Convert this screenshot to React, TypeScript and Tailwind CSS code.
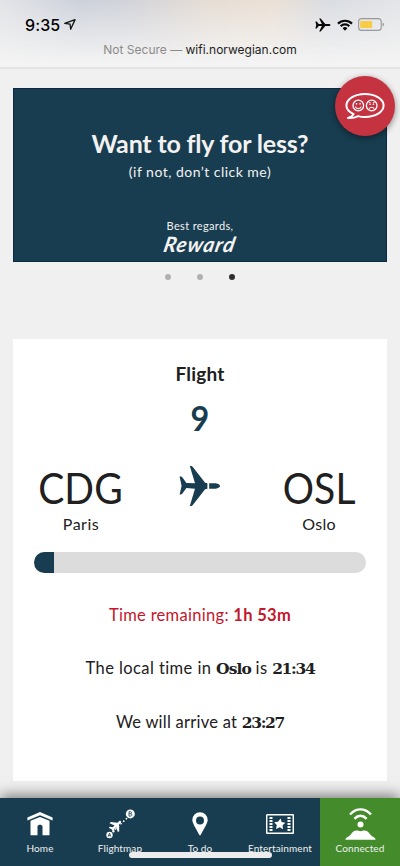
import React from "react";

function StatusBar() {
  return (
    <header className="h-[69px] shrink-0 border-b-2 border-[#e4e4e4] bg-[linear-gradient(to_bottom,transparent_0%,#f3f3f3_92%),linear-gradient(to_right,#e2e4e7_0%,#cdd1db_20%,#d1d3da_32%,#e6ddd4_53%,#ebe0d5_68%,#d9dce2_82%,#e3e5e8_100%)]">
      <div className="flex h-[40px] items-center pt-[9px] pl-[25px] pr-[15px]">
        <span className="w-[36px] whitespace-nowrap font-['Inter',sans-serif] text-[16px] leading-5 font-medium tracking-[0.1px] text-black">9:35</span>
        <svg className="ml-[3px]" width="12" height="13" viewBox="0 0 13 13" fill="none" stroke="#111" strokeWidth="1.4" strokeLinejoin="round">
          <path d="M.8 5.2 12 1.2 7.2 11.6 6.6 6.2Z" />
        </svg>
        <svg className="ml-auto" width="16" height="14" viewBox="0 0 16 14">
          <path d="M.4 3.5h1.3l2 2.4h3.2L4.2.5h1.5l4.6 5.4h3.4c1 0 1.8.5 1.8 1.1s-.8 1.1-1.8 1.1h-3.4l-4.6 5.4H4.2l2.7-5.4H3.7l-2 2.4H.4L1.2 7Z" fill="#080808" />
        </svg>
        <svg className="ml-[6px]" width="16" height="12" viewBox="0 0 16 12" fill="none" stroke="#080808" strokeWidth="2.2">
          <path d="M1 4.6a10 10 0 0 1 14 0M3.7 7.2a6.2 6.2 0 0 1 8.6 0" />
          <path d="M5.6 9.3a3.4 3.4 0 0 1 4.8 0L8 11.7Z" fill="#080808" stroke="none" />
        </svg>
        <svg className="ml-[5px]" width="27" height="13" viewBox="0 0 27 13">
          <rect x=".6" y=".6" width="22.6" height="11.8" rx="3" fill="none" stroke="#999" strokeWidth="1.1" />
          <rect x="2.2" y="3" width="12" height="7" rx="1" fill="#f8cc46" />
          <path d="M24.5 4.5c2 .7 2 3.3 0 4Z" fill="#999" />
        </svg>
      </div>
      <p className="text-center font-['Inter',sans-serif] text-[12px] leading-5 whitespace-nowrap text-[#8b8b8b]">
        <span>Not Secure — </span><span className="text-[#1d1d1d]">wifi.norwegian.com</span>
      </p>
    </header>
  );
}

function FeedbackButton() {
  return (
    <button className="absolute top-[76px] left-[335px] flex size-[60px] items-center justify-center rounded-full bg-[#c53240] shadow-[0_2px_6px_rgba(0,0,0,0.45)]">
      <svg width="40" height="28" viewBox="0 0 40 28" fill="none" stroke="white">
        <path d="M8.6 22.1C4.2 20.1 1.4 17.2 1.4 13.6 1.4 7.2 9.6 2 20 2s18.6 5.2 18.6 11.6S30.4 25 20 25c-2.4 0-4.8-.3-6.8-.9-2.9 1.5-6.6 2.2-10.2 1.9 2.5-.8 4.6-2 5.6-3.9Z" strokeWidth="2" strokeLinejoin="round" />
        <circle cx="13.3" cy="13.5" r="5.3" strokeWidth="1.3" />
        <circle cx="26.7" cy="13.5" r="5.3" strokeWidth="1.3" />
        <path d="M10.3 14.6c1 2.7 5 2.7 6 0M24.2 16.9c1-2.3 4-2.3 5 0M24 10.3l1.5 1M29.4 10.3l-1.5 1" strokeWidth="1.1" />
        <path d="M11.5 11v1.5M15.1 11v1.5M25.1 11.9v1.2M28.4 11.9v1.2" strokeWidth="1.4" />
      </svg>
    </button>
  );
}

function Banner() {
  return (
    <section className="mx-[13px] mt-[19px] h-[174px] border border-[#0c2843] bg-[#183d50] text-center text-[#f3f2f0]">
      <h1 className="pt-[38px] text-[25px] leading-8 font-bold tracking-[-0.18px] whitespace-nowrap">Want to fly for less?</h1>
      <p className="pt-[3px] text-[14px] leading-5 tracking-[0.48px]">(if not, don’t click me)</p>
      <p className="pt-[36px] text-[11px] leading-4 tracking-[0.35px]">Best regards,</p>
      <p className="-mt-px -skew-x-12 text-[21px] leading-[22px] font-bold tracking-[0.8px] italic">Reward</p>
    </section>
  );
}

function PlaneIcon() {
  return (
    <svg width="42" height="42" viewBox="0 0 42 42" fill="#183d50">
      <path d="M10.8 1h1.2c.8 0 1.3.4 1.8 1.1l12.3 15.7 2.3.5v5.4l-2.3.5-12.3 15.7c-.5.7-1 1.1-1.8 1.1h-1.2l5.2-17.2-8.6-.7-3.8 5.2c-.5.7-1 1.1-1.7 1.1H.6L2.6 21 .6 11.6h1.3c.7 0 1.2.4 1.7 1.1l3.8 5.2 8.6.3Z" />
      <path d="M30.2 18.3h5.3c2.9 0 5.5 1.4 5.5 2.7s-2.6 2.7-5.5 2.7h-5.3Z" />
    </svg>
  );
}

function FlightCard() {
  return (
    <section className="mx-[13px] mt-[59px] h-[442px] shrink-0 bg-white px-[21px] pt-[23px] text-center text-[#202020]">
      <h2 className="text-[19px] leading-6 font-bold tracking-[0.2px]">Flight</h2>
      <p className="pt-[14px] text-[34px] leading-9 font-bold text-[#183d50]"><span className="inline-block scale-x-95">9</span></p>
      <div className="mt-[26px] flex justify-between">
        <div className="flex w-[94px] flex-col items-center">
          <span className="-ml-[2px] scale-x-[0.93] text-[42px] leading-[52px] tracking-[0.1px]">CDG</span>
          <span className="text-[16px] leading-5 tracking-[0.5px]">Paris</span>
        </div>
        <div className="pt-[3px]"><PlaneIcon /></div>
        <div className="flex w-[94px] flex-col items-center">
          <span className="scale-x-[0.93] text-[42px] leading-[52px] tracking-[0.1px]">OSL</span>
          <span className="text-[16px] leading-5 tracking-[0.3px]">Oslo</span>
        </div>
      </div>
      <div className="mt-[18px] h-[21px] overflow-hidden rounded-full bg-[#dcdcdc]">
        <div className="h-full w-[20px] bg-[#183d50]" />
      </div>
      <p className="mt-[30px] text-[16.5px] leading-6 tracking-[0.3px] text-[#c3162b]">Time remaining: <b>1h 53m</b></p>
      <p className="mt-[29px] text-[16.5px] leading-6 tracking-[0.42px] whitespace-nowrap">The local time in <b className="font-['DejaVu_Serif',serif] text-[15.5px] tracking-[-0.9px]">Oslo</b> is <b className="font-['DejaVu_Serif',serif] text-[15.5px] tracking-[-1.3px]">21:34</b></p>
      <p className="mt-[29px] text-[16.5px] leading-6 tracking-[0.25px]">We will arrive at <b className="font-['DejaVu_Serif',serif] text-[15.5px] tracking-[-1.3px]">23:27</b></p>
    </section>
  );
}

function NavItem({ label, active, children }: { label: string; active?: boolean; children: React.ReactNode }) {
  return (
    <a className={`flex w-20 flex-col items-center ${active ? "bg-[#438b2b]" : ""}`}>
      <div className="flex h-[43px] items-center justify-center pt-[9px]">{children}</div>
      <span className="text-[10px] leading-[14px] tracking-[0.1px] text-[#f1f1f1]">{label}</span>
    </a>
  );
}

function Navigation() {
  return (
    <nav className="relative mt-[17px] flex h-[68px] shrink-0 bg-[#183d50] shadow-[0_-2px_14px_rgba(0,0,0,0.55)]">
      <NavItem label="Home">
        <svg width="26" height="24" viewBox="0 0 26 24" fill="white">
          <path d="M13 0 25.6 5.4v3.1L13 3.3.4 8.5V5.4Z" />
          <path d="M3.5 8.8 13 5l9.5 3.8v14.4h-7V14.5c0-2.2-5-2.2-5 0v8.7h-7Z" />
        </svg>
      </NavItem>
      <NavItem label="Flightmap">
        <svg width="30" height="30" viewBox="0 0 30 30" fill="white">
          <circle cx="4.5" cy="26" r="3.2" />
          <circle cx="25.3" cy="4.9" r="4.5" />
          <path d="m7.5 23 14.8-14.2" fill="none" stroke="white" strokeWidth="1.5" strokeDasharray="1.6 2.1" />
          <path transform="translate(10.7 17) rotate(-43) scale(.88)" d="M-7-4h1.5l2 2.7h3L-3-7h2l5 5.7h2.5c2 0 2 2.6 0 2.6H4L-1 7h-2L-.5 1.3h-3l-2 2.7H-7l1-4Z" />
          <path d="m3.2 27.6 1.3-3.5 1.3 3.5m-2.1-1h1.6M24 2.7v4.4M24 2.7h1.4c1.6 0 1.6 2 0 2H24m1.4 0c2 0 2 2.4 0 2.4H24" fill="none" stroke="#183d50" strokeWidth=".8" />
        </svg>
      </NavItem>
      <NavItem label="To do">
        <svg width="16" height="24" viewBox="0 0 16 24" fill="white">
          <path fillRule="evenodd" d="M8 .3a7.7 7.7 0 0 0-7.7 7.8c0 3.3 5.2 11.2 6.7 14.5.5 1.1 1.5 1.1 2 0 1.5-3.3 6.7-11.2 6.7-14.5A7.7 7.7 0 0 0 8 .3Zm0 4.1a4 4 0 1 1 0 8 4 4 0 0 1 0-8Z" />
        </svg>
      </NavItem>
      <NavItem label="Entertainment">
        <svg width="28" height="20" viewBox="0 0 28 20">
          <rect x=".7" y=".8" width="26.6" height="18.4" rx=".5" fill="none" stroke="white" strokeWidth="1.5" />
          <path d="M5 3v14M23 3v14" stroke="white" strokeWidth="3" strokeDasharray="2 1" />
          <path d="m14.6 4.5 1 3.4 3.8.9-2.8 2.5.4 4-3.3-2-3.7 1.6.8-3.9-2.6-2.8 3.8-.4Z" fill="white" />
        </svg>
      </NavItem>
      <NavItem label="Connected" active>
        <svg width="31" height="32" viewBox="0 0 31 32" fill="none" stroke="white" strokeWidth="2.4">
          <path d="M5 6.5c6.3-6.8 14.7-6.8 21 0M9.4 10.8c3.8-4 8.4-4 12.2 0" />
          <circle cx="15.5" cy="16.5" r="3" fill="white" stroke="none" />
          <path d="M.4 31.8c0-2.6 3-2.4 5.3-5.3 2.2-3.4 4.3-4.5 7.1-3.9 2 .9 3.4.9 5.4 0 2.8-.6 4.9.5 7.1 3.9 2.3 2.9 5.3 2.7 5.3 5.3Z" fill="white" stroke="none" />
        </svg>
      </NavItem>
      <div className="absolute top-[54px] left-[129px] h-[6px] w-[143px] rounded-full bg-[#ececec]" />
    </nav>
  );
}

export default function App() {
  return (
    <main className="relative flex h-[866px] w-[400px] flex-col overflow-hidden bg-[#f0f0f0] font-['Lato',sans-serif]">
      <StatusBar />
      <Banner />
      <div className="mt-[12px] flex h-[6px] shrink-0 justify-center gap-[26px]">
        <i className="size-[6px] rounded-full bg-[#b1b1b1]" />
        <i className="size-[6px] rounded-full bg-[#b1b1b1]" />
        <i className="size-[6px] rounded-full bg-[#2f2f2f]" />
      </div>
      <FlightCard />
      <Navigation />
      <FeedbackButton />
    </main>
  );
}
